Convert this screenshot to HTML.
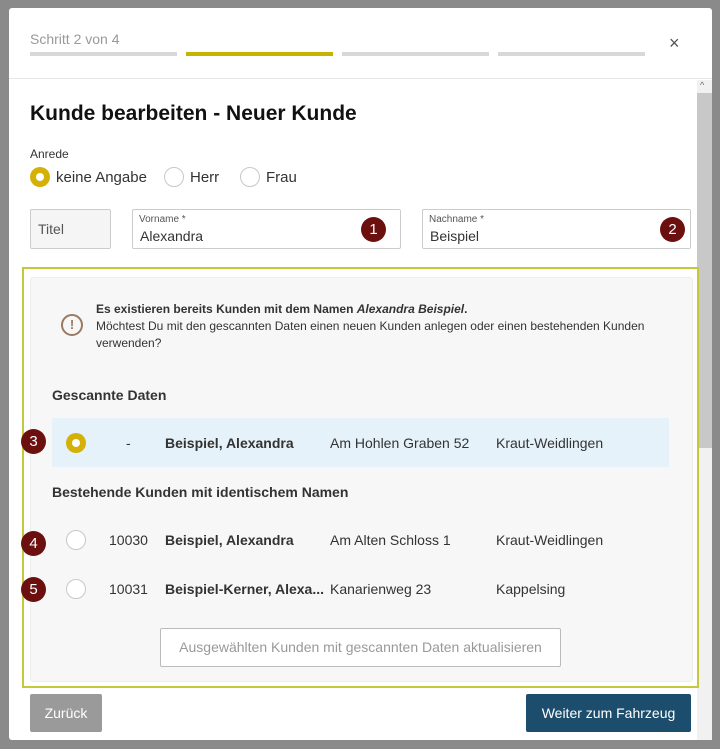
<!DOCTYPE html>
<html><head><meta charset="utf-8"><style>
*{box-sizing:border-box;margin:0;padding:0}
body{width:720px;height:749px;background:#8a8a8a;font-family:"Liberation Sans",sans-serif;position:relative;overflow:hidden;color:#222}
.abs{position:absolute}
.modal{left:9px;top:8px;width:703px;height:732px;background:#fff;border-radius:3px}
.bar{top:52px;height:4px;width:147px;background:#d8d8d8}
.radio{width:20px;height:20px;border-radius:50%;border:1px solid #c8c8c8;background:#fff}
.rsel{width:20px;height:20px;border-radius:50%;background:#d4b106}
.rsel:after{content:"";position:absolute;left:6px;top:6px;width:8px;height:8px;border-radius:50%;background:#fff}
.badge{width:25px;height:25px;border-radius:50%;background:#6b0f0f;color:#fff;font-size:15px;text-align:center;line-height:25px}
.inp{border:1px solid #ccc;border-radius:2px;height:40px;top:209px;background:#fff}
.t{font-size:14px;color:#333;white-space:nowrap}
.b{font-weight:bold}
</style></head><body>
<div class="abs modal"></div>
<div class="abs" style="left:30px;top:31px;font-size:14px;color:#999">Schritt 2 von 4</div>
<div class="abs bar" style="left:30px"></div>
<div class="abs bar" style="left:186px;background:#c8b200"></div>
<div class="abs bar" style="left:342px"></div>
<div class="abs bar" style="left:498px"></div>
<div class="abs" style="left:669px;top:33px;font-size:18px;color:#555">×</div>
<div class="abs" style="left:9px;top:78px;width:703px;height:1px;background:#e6e6e6"></div>
<div class="abs" style="left:697px;top:80px;width:15px;height:660px;background:#f1f1f1"></div>
<div class="abs" style="left:697px;top:93px;width:15px;height:355px;background:#c8c8c8"></div>
<div class="abs" style="left:700px;top:80px;font-size:9px;color:#666">^</div>
<div class="abs" style="left:30px;top:102px;font-size:21px;font-weight:bold;color:#111">Kunde bearbeiten - Neuer Kunde</div>
<div class="abs" style="left:30px;top:147px;font-size:12px;color:#333">Anrede</div>
<div class="abs rsel" style="left:30px;top:167px"></div>
<div class="abs t" style="left:56px;top:169px;font-size:15px">keine Angabe</div>
<div class="abs radio" style="left:164px;top:167px"></div>
<div class="abs t" style="left:190px;top:169px;font-size:15px">Herr</div>
<div class="abs radio" style="left:240px;top:167px"></div>
<div class="abs t" style="left:266px;top:169px;font-size:15px">Frau</div>
<div class="abs inp" style="left:30px;width:81px;background:#f5f5f5"></div>
<div class="abs t" style="left:38px;top:221px;color:#555">Titel</div>
<div class="abs inp" style="left:132px;width:269px"></div>
<div class="abs" style="left:139px;top:214px;font-size:10px;color:#555">Vorname *</div>
<div class="abs t" style="left:140px;top:228px;font-size:14px">Alexandra</div>
<div class="abs badge" style="left:361px;top:217px">1</div>
<div class="abs inp" style="left:422px;width:269px"></div>
<div class="abs" style="left:429px;top:214px;font-size:10px;color:#555">Nachname *</div>
<div class="abs t" style="left:430px;top:228px;font-size:14px">Beispiel</div>
<div class="abs badge" style="left:660px;top:217px">2</div>
<div class="abs" style="left:22px;top:267px;width:677px;height:421px;border:2px solid #c5c83a;background:#fff"></div>
<div class="abs" style="left:30px;top:277px;width:663px;height:405px;background:#f7f7f7;border:1px solid #eee;border-radius:3px"></div>
<div class="abs" style="left:61px;top:314px;width:22px;height:22px;border-radius:50%;border:2px solid #9a7a60;color:#9a7a60;font-size:13px;font-weight:bold;text-align:center;line-height:18px">!</div>
<div class="abs" style="left:96px;top:301px;font-size:12px;line-height:17px;color:#333;width:590px"><b>Es existieren bereits Kunden mit dem Namen <i>Alexandra Beispiel</i>.</b><br>Möchtest Du mit den gescannten Daten einen neuen Kunden anlegen oder einen bestehenden Kunden verwenden?</div>
<div class="abs t b" style="left:52px;top:387px">Gescannte Daten</div>
<div class="abs" style="left:52px;top:418px;width:617px;height:49px;background:#e5f2fa"></div>
<div class="abs rsel" style="left:66px;top:433px"></div>
<div class="abs t" style="left:126px;top:435px">-</div>
<div class="abs t b" style="left:165px;top:435px">Beispiel, Alexandra</div>
<div class="abs t" style="left:330px;top:435px">Am Hohlen Graben 52</div>
<div class="abs t" style="left:496px;top:435px">Kraut-Weidlingen</div>
<div class="abs badge" style="left:21px;top:429px">3</div>
<div class="abs t b" style="left:52px;top:484px">Bestehende Kunden mit identischem Namen</div>
<div class="abs radio" style="left:66px;top:530px"></div>
<div class="abs t" style="left:109px;top:532px">10030</div>
<div class="abs t b" style="left:165px;top:532px">Beispiel, Alexandra</div>
<div class="abs t" style="left:330px;top:532px">Am Alten Schloss 1</div>
<div class="abs t" style="left:496px;top:532px">Kraut-Weidlingen</div>
<div class="abs badge" style="left:21px;top:531px">4</div>
<div class="abs radio" style="left:66px;top:579px"></div>
<div class="abs t" style="left:109px;top:581px">10031</div>
<div class="abs t b" style="left:165px;top:581px">Beispiel-Kerner, Alexa...</div>
<div class="abs t" style="left:330px;top:581px">Kanarienweg 23</div>
<div class="abs t" style="left:496px;top:581px">Kappelsing</div>
<div class="abs badge" style="left:21px;top:577px">5</div>
<div class="abs" style="left:160px;top:628px;width:401px;height:39px;border:1px solid #bbb;border-radius:2px;background:#fff;color:#999;font-size:14px;text-align:center;line-height:37px">Ausgewählten Kunden mit gescannten Daten aktualisieren</div>
<div class="abs" style="left:30px;top:694px;width:72px;height:38px;background:#9a9a9a;border-radius:2px;color:#fff;font-size:14px;text-align:center;line-height:38px">Zurück</div>
<div class="abs" style="left:526px;top:694px;width:165px;height:38px;background:#1d4d6c;border-radius:2px;color:#fff;font-size:14px;text-align:center;line-height:38px">Weiter zum Fahrzeug</div>
</body></html>
